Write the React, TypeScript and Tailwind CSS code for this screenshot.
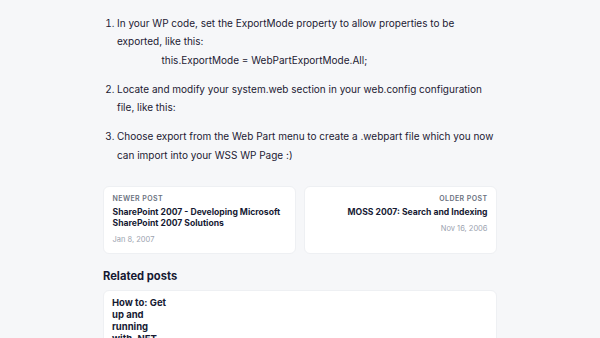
import React from 'react';

const steps = [
  {
    text: 'In your WP code, set the ExportMode property to allow properties to be exported, like this:',
    code: 'this.ExportMode = WebPartExportMode.All;',
  },
  {
    text: 'Locate and modify your system.web section in your web.config configuration file, like this:',
  },
  {
    text: 'Choose export from the Web Part menu to create a .webpart file which you now can import into your WSS WP Page :)',
  },
];

export default function App() {
  return (
    <div className="min-h-screen w-full bg-[#f6f7f9] text-[#1c2033] font-['Inter',sans-serif] overflow-hidden">
      <div className="mx-auto w-[394px] pt-[14px]">
        {/* Article steps */}
        <ol className="list-decimal pl-[14px] text-[10px] leading-[18.3px] space-y-[11px]">
          {steps.map((step) => (
            <li key={step.text}>
              {step.text}
              {step.code && <div className="pl-[44.5px]">{step.code}</div>}
            </li>
          ))}
        </ol>

        {/* Post navigation */}
        <div className="grid grid-cols-2 gap-[8px] mt-[22px]">
          <a className="block bg-white rounded-[6px] border border-[#eef0f3] px-[8.5px] pt-[6px] pb-[8px]">
            <div className="text-[7px] leading-[11px] font-semibold tracking-[0.06em] uppercase text-[#6b7280]">Newer post</div>
            <div className="mt-[3px] text-[8.6px] leading-[10.7px] font-bold text-[#161a33]">
              SharePoint 2007 - Developing Microsoft SharePoint 2007 Solutions
            </div>
            <div className="mt-[6px] text-[7.5px] leading-[11px] text-[#9ca3af]">Jan 8, 2007</div>
          </a>
          <a className="block bg-white rounded-[6px] border border-[#eef0f3] px-[8.5px] pt-[6px] pb-[8px] text-right">
            <div className="text-[7px] leading-[11px] font-semibold tracking-[0.06em] uppercase text-[#6b7280]">Older post</div>
            <div className="mt-[3px] text-[8.6px] leading-[10.7px] font-bold text-[#161a33]">
              MOSS 2007: Search and Indexing
            </div>
            <div className="mt-[5px] text-[7.5px] leading-[11px] text-[#9ca3af]">Nov 16, 2006</div>
          </a>
        </div>

        {/* Related */}
        <h2 className="mt-[15px] text-[11.2px] leading-[14px] font-bold text-[#161a33]">Related posts</h2>
        <div className="mt-[7px] bg-white rounded-t-[6px] border border-[#eef0f3] px-[8px] pt-[6px] pb-[10px]">
          <div className="w-[55px] text-[9.5px] leading-[11.7px] font-bold text-[#161a33]">
            How to: Get up and running with .NET Framework 3.0 and Visual Studio 2005
          </div>
        </div>
      </div>
    </div>
  );
}
